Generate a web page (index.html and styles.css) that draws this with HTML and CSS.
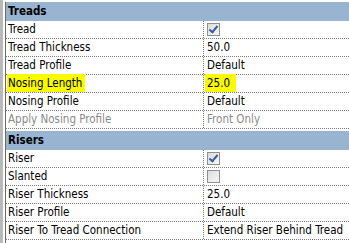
FILE: index.html
```html
<!DOCTYPE html>
<html>
<head>
    <link rel="stylesheet" href="styles.css">
    <title>Stair Properties</title>
</head>
<body>
    <div class="frame">
        <div class="sheet">
            <div class="group">Treads</div>
            <div class="row">
                <div class="name">Tread</div>
                <div class="value"><span class="check on"></span></div>
            </div>
            <div class="row">
                <div class="name">Tread Thickness</div>
                <div class="value">50.0</div>
            </div>
            <div class="row">
                <div class="name">Tread Profile</div>
                <div class="value">Default</div>
            </div>
            <div class="row">
                <div class="name"><span class="mark">Nosing Length</span></div>
                <div class="value"><span class="mark wide">25.0</span></div>
            </div>
            <div class="row">
                <div class="name">Nosing Profile</div>
                <div class="value">Default</div>
            </div>
            <div class="row off">
                <div class="name">Apply Nosing Profile</div>
                <div class="value">Front Only</div>
            </div>

            <div class="group second">Risers</div>
            <div class="row">
                <div class="name">Riser</div>
                <div class="value"><span class="check on"></span></div>
            </div>
            <div class="row">
                <div class="name">Slanted</div>
                <div class="value"><span class="check"></span></div>
            </div>
            <div class="row">
                <div class="name">Riser Thickness</div>
                <div class="value">25.0</div>
            </div>
            <div class="row">
                <div class="name">Riser Profile</div>
                <div class="value">Default</div>
            </div>
            <div class="row">
                <div class="name">Riser To Tread Connection</div>
                <div class="value">Extend Riser Behind Tread</div>
            </div>
        </div>
    </div>
</body>
</html>
```

FILE: styles.css
```css
*{
    margin: 0px;
    padding: 0px;
    box-sizing: border-box;
}
body{
    background-color: #ffffff;
    font-family: "DejaVu Sans Condensed", "DejaVu Sans", sans-serif;
    font-size: 11.5px;
    color: #000000;
    height: 243px;
    overflow: hidden;
}
.frame{
    border-left: 3px solid #b9b9b9;
    padding-left: 2px;
    padding-top: 2px;
    height: 243px;
}
.sheet{
    border-left: 1px solid #6a6a6a;
    height: 100%;
}
.group{
    height: 19px;
    line-height: 19px;
    padding-left: 2px;
    font-weight: bold;
    background-color: #99b4d1;
}
.second{
    margin-top: 2px;
}
.row{
    display: grid;
    grid-template-columns: 198px 1fr;
    height: 18px;
    border-bottom: 1px dotted #7c7c7c;
}
.name{
    padding-left: 2px;
    line-height: 17px;
    border-right: 1px dotted #7c7c7c;
    white-space: nowrap;
}
.value{
    padding-left: 3px;
    line-height: 17px;
    white-space: nowrap;
}
.off{
    color: #8a8a8a;
}
.mark{
    background-color: #fbfb00;
    padding: 2px 3px 2px 1px;
    margin-left: -1px;
}
.mark.wide{
    padding-right: 6px;
    margin-left: -2px;
    padding-left: 2px;
}
.check{
    display: inline-block;
    width: 13px;
    height: 13px;
    margin-top: 2px;
    vertical-align: top;
    border: 1px solid #8f8f8f;
    background: linear-gradient(135deg, #dcdcdc, #f7f7f7);
    position: relative;
}
.check.on::after{
    content: "";
    position: absolute;
    left: 3px;
    top: 0px;
    width: 3px;
    height: 7px;
    border-right: 2px solid #3b5aa0;
    border-bottom: 2px solid #3b5aa0;
    transform: rotate(40deg);
}
```
